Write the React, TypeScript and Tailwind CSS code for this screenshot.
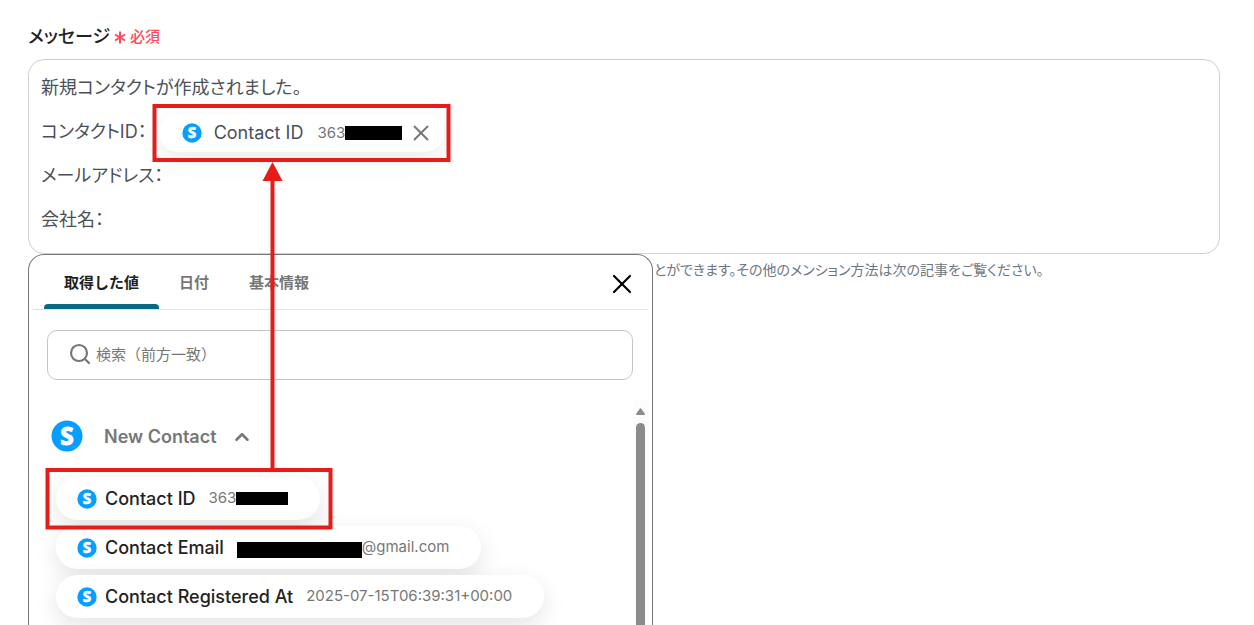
import { useState } from "react";
import { ChevronUp, Search, X } from "lucide-react";

const tabs = ["取得した値", "日付", "基本情報"];

const values = [
  { label: "Contact ID", before: "363", mask: "w-[52px] h-[13px]", after: "" },
  { label: "Contact Email", before: "", mask: "w-[125px] h-4 mt-1", after: "@gmail.com" },
  { label: "Contact Registered At", before: "2025-07-15T06:39:31+00:00", mask: "", after: "" },
];

const ServiceLogo = ({ className }: { className: string }) => (
  <svg viewBox="0 0 32 32" className={`shrink-0 overflow-visible ${className}`} aria-hidden="true">
    <circle cx="16" cy="16" r="15.5" fill="#069fff" />
    <text
      x="16"
      y="24.5"
      textAnchor="middle"
      fill="#fff"
      stroke="#fff"
      strokeWidth="0.8"
      fontFamily="'Noto Sans', sans-serif"
      fontWeight="800"
      fontSize="24"
    >
      S
    </text>
  </svg>
);

// Highlight frames and the arrow between them
const Annotations = () => (
  <svg className="absolute left-0 top-0 z-20 pointer-events-none" width="460" height="540" aria-hidden="true">
    <g fill="none" stroke="#e81b1b" strokeWidth="4">
      <rect x="154.5" y="106" width="294" height="54" />
      <rect x="47.5" y="470" width="283" height="57.5" />
      <path d="M272.5 468V178" />
    </g>
    <path d="M272.5 162L282.500 181H262.500Z" fill="#e81b1b" />
  </svg>
);

const MessageEditor = () => {
  const [mentioned, setMentioned] = useState(true);

  return (
    <section className="pt-6 pl-7 pr-[34px] [font-feature-settings:'palt']">
      <div className="flex items-center gap-1 h-6">
        <h2 id="message-label" className="text-[18px] font-medium text-[#222]">メッセージ</h2>
        <svg width="12" height="13" viewBox="0 0 12 13" className="mt-0.5" aria-hidden="true">
          <path d="M6 .5V12.500M1 3.500L11 9.500M11 3.500L1 9.500" stroke="#ff4a5c" strokeWidth="2" />
        </svg>
        <span className="pt-0.5 text-[15px] font-medium text-[#ff4a5c]">必須</span>
      </div>

      <div
        role="textbox"
        aria-multiline="true"
        aria-labelledby="message-label"
        tabIndex={0}
        className="mt-[11px] h-[195px] border border-[#cdd0d4] rounded-2xl px-3 pt-1.5 text-[18px] leading-[44px] text-[#4b5058]"
      >
        <p>新規コンタクトが作成されました。</p>
        <div className="flex items-center h-11">
          <span>コンタクトID：</span>
          {mentioned && (
            <span className="flex items-center h-[38px] mt-0.5 ml-3 pl-[23px] pr-2.5 rounded-full bg-white leading-6 shadow-[0_8px_24px_rgba(0,0,0,0.08)]">
              <ServiceLogo className="size-5" />
              <span className="ml-3">Contact ID</span>
              <span className="ml-3.5 text-[15px] text-[#777]">363</span>
              <span className="w-[57px] h-3.5 bg-black" />
              <button aria-label="Contact IDを削除" className="ml-1.5 text-[#777]" onClick={() => setMentioned(false)}>
                <X size={26} strokeWidth={1.8} />
              </button>
            </span>
          )}
        </div>
        <p>メールアドレス：</p>
        <p>会社名：</p>
      </div>

      <p className="mt-1 pl-[626px] text-[14px] leading-6 text-[#6e7680] whitespace-nowrap">
        とができます。その他のメンション方法は次の記事をご覧ください。
      </p>
    </section>
  );
};

const MentionPicker = () => {
  const [activeTab, setActiveTab] = useState(0);
  const [expanded, setExpanded] = useState(true);

  return (
    <div
      role="dialog"
      aria-label="メンション"
      className="absolute left-7 top-[254px] bottom-0 z-10 w-[625px] flex flex-col bg-white border border-b-0 border-[#777] rounded-t-2xl px-1 overflow-hidden"
    >
      <div className="flex shrink-0 items-stretch h-[55px] pl-[11px] pr-2.5 border-b border-[#e2e2e2]">
        <div role="tablist" className="flex flex-1">
          {tabs.map((tab, i) => (
            <button
              key={tab}
              role="tab"
              aria-selected={i === activeTab}
              onClick={() => setActiveTab(i)}
              className={`relative px-5 pt-0.5 text-[15px] font-bold ${i === activeTab ? "text-[#222]" : "text-[#777]"}`}
            >
              {tab}
              {i === activeTab && <span className="absolute inset-x-0 bottom-0 h-[5px] rounded-t bg-[#066a82]" />}
            </button>
          ))}
        </div>
        <button aria-label="閉じる" className="pt-1 text-black">
          <X size={32} strokeWidth={1.6} />
        </button>
      </div>

      <label className="flex shrink-0 items-center gap-1 h-[50px] mt-5 ml-3.5 mr-[15px] pl-5 border border-[#c4c4c4] rounded-[10px]">
        <Search size={24} strokeWidth={2.2} className="mb-0.5 text-[#777]" />
        <input
          type="text"
          aria-label="検索"
          placeholder="検索（前方一致）"
          className="flex-1 min-w-0 text-[15px] outline-none placeholder:text-[#777]"
        />
      </label>

      <div className="flex flex-1 min-h-0 mt-5">
        <div className="flex-1 min-w-0 overflow-hidden pl-[18px] pt-5">
          <button
            aria-expanded={expanded}
            onClick={() => setExpanded(!expanded)}
            className="flex items-center h-8 text-[18px] font-semibold text-[#777]"
          >
            <ServiceLogo className="size-8" />
            <span className="ml-[21px]">New Contact</span>
            <ChevronUp size={22} strokeWidth={2.8} className="ml-3.5 mt-0.5" />
          </button>

          {expanded && (
            <ul className="flex flex-col items-start gap-1.5 mt-[25px] ml-[5px]">
              {values.map((value) => (
                <li key={value.label}>
                  <button className="flex items-center h-[43px] pl-[21px] pr-8 rounded-full bg-white whitespace-nowrap shadow-[0_8px_24px_rgba(0,0,0,0.11)]">
                    <ServiceLogo className="size-5" />
                    <span className="ml-2 text-[18px] font-medium text-[#222]">{value.label}</span>
                    <span className="flex items-center ml-[13px] text-[15px] text-[#777]">
                      {value.before}
                      {value.mask && <span className={`bg-black ${value.mask}`} />}
                      {value.after}
                    </span>
                  </button>
                </li>
              ))}
            </ul>
          )}
        </div>

        {/* scrollbar */}
        <div className="flex flex-col items-center w-[15px] pt-2 bg-[#fcfcfc]" aria-hidden="true">
          <svg width="9" height="7" viewBox="0 0 9 7">
            <path d="M3.500 1Q4.500 -.5 5.500 1L9 6Q9 7 8 7H1Q0 7 0 6Z" fill="#8b8b8b" />
          </svg>
          <div className="flex-1 w-[9px] mt-2 rounded-t-full bg-[#8b8b8b]" />
        </div>
      </div>
    </div>
  );
};

const App = () => (
  <main className="relative h-screen overflow-hidden bg-white font-[Inter,'Noto_Sans_CJK_JP',sans-serif]">
    <MessageEditor />
    <MentionPicker />
    <Annotations />
  </main>
);

export default App;
